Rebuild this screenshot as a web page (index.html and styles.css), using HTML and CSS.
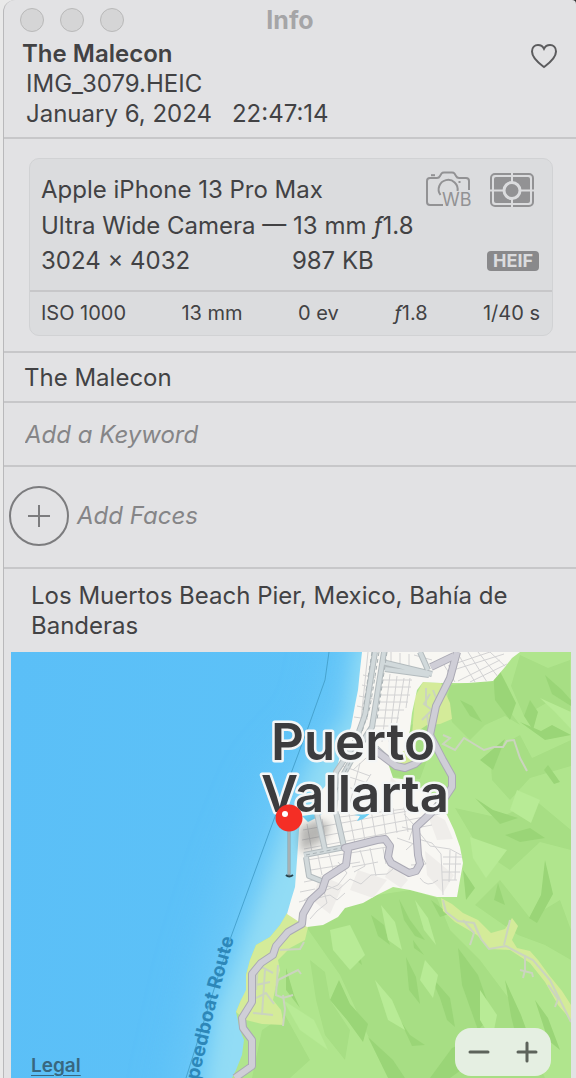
FILE: index.html
```html
<!DOCTYPE html>
<html lang="en">
  <head>
    <meta charset="utf-8" />
    <title>Info</title>
    <meta name="viewport" content="width=device-width, initial-scale=1" />
    <link rel="stylesheet" href="styles.css" />
  </head>
  <body>
    <main class="window">
      <header class="titlebar">
        <div class="lights">
          <button class="light" aria-label="Close"></button>
          <button class="light" aria-label="Minimize"></button>
          <button class="light" aria-label="Zoom"></button>
        </div>
        <h1>Info</h1>
      </header>

      <section class="summary">
        <div class="summary-text">
          <h2>The Malecon</h2>
          <p>IMG_3079.HEIC</p>
          <p class="date"><span>January 6, 2024</span><span>22:47:14</span></p>
        </div>
        <button class="favorite" aria-label="Favorite">
          <svg width="28" height="26" viewBox="0 0 28 26">
            <path d="M14 24C10 21 2 15.500 2 8.500C2 4.500 4.700 2 8 2C10.700 2 12.900 3.500 14 5.800C15.100 3.500 17.300 2 20 2C23.300 2 26 4.500 26 8.500C26 15.500 18 21 14 24Z" />
          </svg>
        </button>
      </section>

      <section class="camera">
        <div class="card">
          <div class="card-main">
            <div class="row">
              <span>Apple iPhone 13 Pro Max</span>
              <div class="icons">
                <svg width="46" height="38" viewBox="0 0 46 38">
                  <g class="line">
                    <path d="M17 34H4Q1 34 1 31V10Q1 7 4 7H11Q13 7 14 5L15.500 2.500Q16.300 1.500 18 1.500H26Q27.700 1.500 28.500 2.500L30 5Q31 7 33 7H40Q43 7 43 10V19" />
                    <path d="M5 4.200H9" />
                    <path d="M14.500 24A9.500 9.500 0 1 1 31.500 20" />
                    <path d="M32.500 11H34.500" />
                  </g>
                  <text x="16" y="35">WB</text>
                </svg>
                <svg width="44" height="36" viewBox="0 0 44 36">
                  <rect class="frame" x="1" y="2" width="42" height="32" rx="4" />
                  <rect class="fill" x="4" y="5" width="36" height="26" rx="2" />
                  <path class="gap" d="M22 0V36M0 18.500H44" />
                  <circle class="ring" cx="22" cy="18.500" r="8" />
                </svg>
              </div>
            </div>
            <p>Ultra Wide Camera — 13 mm <i>ƒ</i>1.8</p>
            <div class="row size">
              <span>3024 × 4032</span>
              <span>987 KB</span>
              <span class="badge">HEIF</span>
            </div>
          </div>
          <ul class="exposure">
            <li>ISO 1000</li>
            <li>13 mm</li>
            <li>0 ev</li>
            <li><i>ƒ</i>1.8</li>
            <li>1/40 s</li>
          </ul>
        </div>
      </section>

      <section class="caption">The Malecon</section>

      <section class="keyword">
        <input type="text" placeholder="Add a Keyword" aria-label="Add a Keyword" />
      </section>

      <section class="faces">
        <button class="add-face">
          <span class="circle">
            <svg width="22" height="22" viewBox="0 0 22 22"><path d="M11 0V22M0 11H22" /></svg>
          </span>
          Add Faces
        </button>
      </section>

      <section class="place">
        <p>Los Muertos Beach Pier, Mexico, Bahía de Banderas</p>
        <div class="map">
          <svg class="map-art" viewBox="11 652 560 426" role="img" aria-label="Map of Puerto Vallarta">
            <defs>
              <linearGradient id="sea" x1="0" x2="1" y1="0" y2="0.100">
                <stop offset="0" stop-color="#5bbff7" />
                <stop offset="1" stop-color="#5ec4f8" />
              </linearGradient>
              <filter id="soft" x="-50%" y="-50%" width="200%" height="200%"><feGaussianBlur stdDeviation="10" /></filter>
              <filter id="wide" x="-50%" y="-50%" width="200%" height="200%"><feGaussianBlur stdDeviation="24" /></filter>
              <filter id="blur" x="-50%" y="-50%" width="200%" height="200%"><feGaussianBlur stdDeviation="4" /></filter>
              <filter id="relief"><feGaussianBlur stdDeviation="0.600" /></filter>
              <clipPath id="land-clip">
                <path d="M362 652H571V1078H232L236 1070L242 1055L244 1040L240 1030L236 1012L241 1000L247 990L246 975L250 960L256 945L270 937L280 925L287 914L340 860L390 760Z" />
              </clipPath>
              <clipPath id="city-clip">
                <path d="M362 652H520L512 658L505 667L493 681L468 683L441 683L423 682L417 690L412 713L410 730L405 750L388 763L393 778L410 780L423 790L447 815L454 830L460 847L463 863L457 897H437L410 890L393 887L377 895L363 903L345 908L338 917L323 925L307 927L287 914L291 900L295 887L297 860L299 830L302 812L318 805L322 790L336 773L340 755L351 727L355 705L358 690L360 670Z" />
              </clipPath>
            </defs>

            <!-- sea and shallows -->
            <rect x="11" y="652" width="560" height="426" fill="url(#sea)" />
            <path filter="url(#wide)" fill="#74cdf8" opacity="0.700" d="M345 620L325 720L270 780L235 870L205 965L170 1120H320L420 900V620Z" />
            <path filter="url(#soft)" fill="#92dcf5" d="M357 640L346 720L312 760L283 830L266 880L240 950L216 1010L202 1100H300L380 900L400 640Z" />
            <path class="ferry" d="M329 652L325 680L309 725L273 822L228 945L186 1078" />

            <!-- hills -->
            <path fill="#b0e58d" d="M362 652H571V1078H232L236 1070L242 1055L244 1040L240 1030L236 1012L241 1000L247 990L246 975L250 960L256 945L270 937L280 925L287 914L340 860L390 760Z" />
            <g clip-path="url(#land-clip)">
              <g filter="url(#relief)">
                <g fill="#a7de84">
                  <path d="M377 895L410 890L437 898L450 930L480 960L510 1000L545 1078H400L370 1040L340 975L307 928L345 908Z" />
                  <path d="M450 685L468 683L493 681L505 705L520 725L505 716L485 725L470 740L452 722L447 700Z" />
                  <path d="M520 655L548 668L570 660V720L548 702L524 716L511 686Z" />
                  <path d="M490 752L520 735L532 758L571 740V766L530 778L510 800L492 780Z" />
                  <path d="M455 808L500 818L535 800L571 830V850L540 842L510 870L480 850Z" />
                  <path d="M475 905L500 880L530 918L560 900L571 930V960L545 945L518 935Z" />
                  <path d="M262 1030L285 1015L310 1060L290 1078H252Z" />
                  <path d="M405 728L425 718L432 746L420 779L393 777L388 764L404 755Z" />
                  <path d="M310 960L325 972L330 1000L350 1030L345 1060L325 1035L316 1000Z" />
                </g>
                <g fill="#9ad577">
                  <path d="M492 656L507 685L516 703L510 720L495 700Z" />
                  <path d="M505 739L493 770L480 760Z" />
                  <path d="M520 722L541 731L552 725L571 735L545 740Z" />
                  <path d="M548 765L560 782L554 784L544 770Z" />
                  <path d="M475 798L493 810L518 818L500 824Z" />
                  <path d="M399 899L410 920L425 940L415 936L404 920Z" />
                  <path d="M413 940L424 955L414 948Z" />
                  <path d="M431 900L449 914L440 917Z" />
                  <path d="M339 980L350 1004L368 1024L363 1042L347 1020L330 1000Z" />
                  <path d="M430 975L450 998L455 1027L447 1020L440 998Z" />
                  <path d="M458 948L478 975L492 1015L478 1030L462 985Z" />
                  <path d="M505 980L521 1015L533 1048L522 1060L511 1016Z" />
                  <path d="M406 957L416 977L420 1004L409 990Z" />
                  <path d="M452 1048L480 1036L464 1068L450 1078H430Z" />
                  <path d="M368 1037L393 1060L405 1078H388Z" />
                  <path d="M498 883L505 905L494 900Z" />
                  <path d="M545 860L553 894L537 923L529 918L541 895Z" />
                  <path d="M463 870L475 888L466 900Z" />
                  <path d="M286 968L294 995L300 1008L286 990Z" />
                  <path d="M530 700L538 712L533 730L524 716Z" />
                  <path d="M460 700L472 706L482 722L470 716Z" />
                  <path d="M545 675L562 690L571 700V706L552 694Z" />
                  <path d="M371 915L384 925L390 945L378 936Z" />
                  <path d="M345 930L358 948L362 965L350 955Z" />
                  <path d="M400 1020L410 1035L425 1045L412 1046Z" />
                  <path d="M535 1000L548 1018L560 1050L548 1040Z" />
                  <path d="M505 835L530 828L545 838L520 842Z" />
                </g>
                <g fill="#b8eb96">
                  <path d="M330 930L350 925L365 955L350 970L333 950Z" />
                  <path d="M381 905L395 922L402 950L388 940Z" />
                  <path d="M283 1000L314 1020L328 1050L300 1030Z" />
                  <path d="M425 960L438 975L433 998L420 980Z" />
                  <path d="M540 698L571 712V729L555 712Z" />
                  <path d="M470 837L507 850L486 878L473 858Z" />
                  <path d="M517 790L540 800L531 823L510 810Z" />
                  <path d="M480 990L497 1015L492 1040L480 1020Z" />
                  <path d="M375 980L392 1000L405 1030L388 1020Z" />
                  <path d="M415 900L428 918L436 945L424 930Z" />
                </g>
              </g>
            </g>

            <!-- scrub -->
            <g fill="#d4eb99">
              <path d="M287 913L280 925L270 937L256 945L250 960L246 975V990L241 1000L236 1012L246 1020L262 1024L284 1025L281 1010L273 1000L276 985L280 970L278 960L290 948L305 940L308 927Z" />
              <path d="M441 898L452 904L463 913L478 920L491 933L505 929L512 918L518 926L512 940L517 948L530 951L538 960L549 975L562 991L571 1005V1020L558 1005L545 982L530 963L510 950L490 949L477 935L455 922L443 911Z" />
              <path d="M423 682L441 683L450 703L452 719L440 724L427 725L412 735L415 697Z" />
              <path d="M404 741L417 735L414 762L398 769Z" />
            </g>

            <!-- city -->
            <g clip-path="url(#city-clip)">
              <rect x="280" y="652" width="250" height="280" fill="#f8f7f3" />
              <g fill="#efedea">
                <path d="M392 862L408 880L401 888L385 877Z" />
                <path d="M425 851L454 875L443 893L427 875Z" />
                <path d="M358 870L387 880L373 898L350 890Z" />
                <path d="M426 810L445 820L453 839L437 840Z" />
                <path d="M391 777L402 787L388 795Z" />
                <path d="M320 875L343 885L330 914L312 900Z" />
              </g>
              <g class="street">
                <path d="M383 680H412M381 687H411M380 695H410M379 702H408M378 710H404M376 718H399M375 726H396M373 734H388M390 674L382 742M397 676L389 742M404 678L396 728M410 678L406 708" />
                <path d="M363 675L376 678M362 685L374 688M359 696L373 699M357 706L370 709M354 717L368 719M368 652L361 720M382 652V662M391 652V664M400 653V668M409 654V670M385 667L428 673M414 655L432 660" />
                <path d="M448 666L490 652M447 672L504 654M458 681L500 660M470 682L507 664M458 654L475 682M468 652L487 682M478 652L499 678M490 652L507 668M440 659L455 682" />
                <path d="M340 765L370 776M337 773L374 785M332 783L362 791M350 757L343 801M360 763L350 803M371 774L354 802M378 747L353 770" />
                <path d="M303 830L430 807M302 840L440 814M304 849L432 825M340 817L420 807M307 824L312 852M322 819L327 850M337 815L343 846M349 814L355 844M360 812L365 841M371 810L376 839M382 809L386 836M393 808L397 833M404 807L408 832" />
                <path d="M307 860L387 847M305 871L360 862M304 882L334 876M317 851L322 875M328 850L333 869M300 892L315 889M299 902L310 899M360 850L365 866L354 872M370 848L376 876M383 848L386 864M352 867L378 862" />
                <path d="M304 900L328 886L338 890L350 879L361 884L371 875L387 874L393 869M338 862L347 873L338 885L324 891L327 903L317 911L310 919M318 898L330 895L337 900L345 893" />
                <path d="M402 827L418 831L430 846L450 849L461 855M397 838L414 844L426 864L411 865M406 850L418 839L432 843L441 854L443 895M443 857H462M443 864H461M442 872H460M442 880H457M450 850L449 882M456 853L455 880M420 878Q427 889 438 880M404 814L414 825L409 840" />
              </g>
              <path fill="#6dcff3" d="M302 816L323 813L318 817L308 822ZM354 815L371 813L363 819L357 821L360 816Z" />
            </g>
            <path filter="url(#blur)" fill="#555" opacity="0.400" d="M299 828L316 820L330 824L324 840L301 853Z" />

            <!-- trails -->
            <g class="trail">
              <path d="M443 735L450 738L443 744L455 750L464 738L484 750L494 747L503 747L507 741L514 740L520 758L527 771" />
              <path d="M443 900L446 912L458 921L474 923L481 939L489 949L506 946L519 953L533 960L550 980L560 1000L571 1022" />
              <path d="M463 920L474 933L470 945M474 923L478 933M525 955V970L523 978M520 970L532 973L533 977M548 985L558 999L555 1007M510 920L504 945" />
              <path d="M280 950L300 949L304 942M278 965L276 995L283 998L293 995M276 990L278 980L298 970L301 974M283 995L285 1009L283 1026M251 971L262 967L273 973M256 985L270 982M252 1000L266 993L274 1004M253 1013L273 1015M265 970L262 1015M258 965L256 990" />
              <path d="M430 694L424 704L432 710L422 720M433 690L439 705L427 715L429 728M426 688V705" />
            </g>

            <!-- major roads -->
            <g class="avenue-edge">
              <path d="M375 652L365 715L357 737L352 748L336 772L334 812M384 652L372 727L357 750L342 777L338 800" />
              <path d="M382 662L432 674M385 669L429 675M420 652L428 670M317 814L325 850M336 812L344 847M304 855L350 846M306 857L309 876L324 882M376 748L392 763" />
            </g>
            <g class="avenue">
              <path d="M375 652L365 715L357 737L352 748L336 772L334 812M384 652L372 727L357 750L342 777L338 800" />
              <path d="M382 662L432 674M385 669L429 675M420 652L428 670M317 814L325 850M336 812L344 847M304 855L350 846M306 857L309 876L324 882M376 748L392 763" />
            </g>
            <path class="dash" d="M379 652L370 707L360 738M372 652L363 710M387 652L377 720M350 762L337 790M306 855L346 847" />
            <g class="highway-edge">
              <path d="M431 667L454 656" />
              <path d="M457 652L450 678L436 706L430 735L443 760L452 776V787L444 799L430 814L416 827L418 855L420 864L416 871L409 873L391 863L388 857L390 846L385 839L377 840L345 848L348 850L346 865L326 878L322 890L311 900L303 914L302 924L288 932L276 946L273 955L261 963L252 974L252 1002L242 1018L243 1028L252 1040L252 1066L235 1078" />
              <path d="M376 751L396 766L405 768L415 764L426 754" />
            </g>
            <g class="highway">
              <path d="M431 667L454 656" />
              <path d="M457 652L450 678L436 706L430 735L443 760L452 776V787L444 799L430 814L416 827L418 855L420 864L416 871L409 873L391 863L388 857L390 846L385 839L377 840L345 848L348 850L346 865L326 878L322 890L311 900L303 914L302 924L288 932L276 946L273 955L261 963L252 974L252 1002L242 1018L243 1028L252 1040L252 1066L235 1078" />
              <path d="M376 751L396 766L405 768L415 764L426 754" />
            </g>

            <!-- labels -->
            <g class="city-name">
              <text x="353" y="760">Puerto</text>
              <text x="355" y="812">Vallarta</text>
            </g>
            <path id="route" fill="none" d="M187 1130L199 1078L216 1004L234 938" />
            <text class="route-name"><textPath href="#route" startOffset="100%">Speedboat Route</textPath></text>

            <!-- pin -->
            <path stroke="#8d9b9f" stroke-width="3" d="M289 830V876" />
            <path stroke="#c0c7c8" stroke-width="1" d="M289 830V874" />
            <path fill="none" stroke="#29424c" stroke-width="2" d="M286 875Q289 878 293 875" />
            <circle cx="289" cy="818" r="13.500" fill="#f42e25" />
            <circle cx="285" cy="814" r="3" fill="#fff" />
          </svg>
          <a class="legal" href="#legal">Legal</a>
          <div class="zoom">
            <button aria-label="Zoom out">
              <svg width="22" height="22" viewBox="0 0 22 22"><path d="M2 11H20" /></svg>
            </button>
            <button aria-label="Zoom in">
              <svg width="22" height="22" viewBox="0 0 22 22"><path d="M2 11H20M11 2V20" /></svg>
            </button>
          </div>
        </div>
      </section>
    </main>
  </body>
</html>
```

FILE: styles.css
```css
* {
  box-sizing: border-box;
}

body {
  margin: 0;
  background: linear-gradient(to right, #e9e9e9 50%, #2c2c2c 50%);
  font-family: Inter, "Liberation Sans", sans-serif;
  font-size: 24px;
  line-height: 30px;
  color: #424244;
}

h1,
h2,
p,
ul {
  margin: 0;
  padding: 0;
}

button,
input {
  margin: 0;
  padding: 0;
  border: 0;
  background: none;
  font: inherit;
  color: inherit;
}

svg {
  display: block;
}

.window {
  margin-left: 3px;
  border-left: 1px solid #b9b9bb;
  border-radius: 12px 4px 0 0;
  background: #e2e2e4;
}

/* Title bar */
.titlebar {
  display: grid;
  grid-template-columns: 1fr auto 1fr;
  align-items: center;
  height: 39px;
  padding: 0 16px;
}

.titlebar h1 {
  font-size: 25px;
  font-weight: 700;
  color: #a5a5a7;
}

.lights {
  display: flex;
  gap: 16px;
}

.light {
  width: 24px;
  height: 24px;
  border: 1px solid #b9b9b9;
  border-radius: 50%;
  background: #d5d5d6;
}

/* Name and date */
.summary {
  display: flex;
  justify-content: space-between;
  padding: 0 18px 8px;
  border-bottom: 2px solid #c7c7c9;
}

.summary h2 {
  font-size: 24px;
  font-weight: 600;
  line-height: 30px;
}

.summary p {
  padding-left: 4px;
}

.date {
  display: flex;
  gap: 20px;
}

.favorite {
  align-self: flex-start;
  margin-top: 4px;
}

.favorite svg {
  fill: none;
  stroke: #5b5b5d;
  stroke-width: 2;
}

/* Camera details */
.camera {
  padding: 19px 23px 15px 25px;
  border-bottom: 2px solid #c7c7c9;
}

.card {
  border: 1px solid #d1d2d4;
  border-radius: 10px;
  background: #dbdcde;
}

.card-main {
  padding: 13px 13px 12px 11px;
  border-bottom: 2px solid #c7c7c9;
}

.card-main p {
  line-height: 36px;
}

.row {
  display: flex;
  justify-content: space-between;
  align-items: center;
  height: 36px;
}

.icons {
  display: flex;
  gap: 18px;
  align-items: center;
  padding-right: 5px;
}

.icons .line {
  fill: none;
  stroke: #929294;
  stroke-width: 2;
}

.icons text {
  font-size: 18px;
  fill: #929294;
}

.icons .frame {
  fill: none;
  stroke: #929294;
  stroke-width: 2;
}

.icons .fill {
  fill: #929294;
}

.icons .gap {
  stroke: #dbdcde;
  stroke-width: 2;
}

.icons .ring {
  fill: #929294;
  stroke: #dbdcde;
  stroke-width: 3;
}

.row.size {
  display: grid;
  grid-template-columns: 9fr 7fr auto;
  height: 34px;
}

.badge {
  width: 52px;
  border-radius: 4px;
  background: #89898b;
  color: #dbdcde;
  font-size: 18px;
  font-weight: 700;
  line-height: 20px;
  text-align: center;
}

.exposure {
  display: flex;
  justify-content: space-between;
  padding: 7px 12px 7px 11px;
  list-style: none;
  font-size: 20px;
  line-height: 29px;
}

/* Caption, keywords and faces */
.caption {
  padding: 10px 20px 8px;
  border-bottom: 2px solid #c7c7c9;
}

.keyword {
  padding: 17px 21px 15px;
  border-bottom: 2px solid #c7c7c9;
}

.keyword input {
  display: block;
  width: 100%;
  height: 30px;
}

.keyword input::placeholder {
  color: #858587;
  font-style: italic;
  opacity: 1;
}

.faces {
  padding: 19px 5px 21px;
  border-bottom: 2px solid #c7c7c9;
}

.add-face {
  display: flex;
  align-items: center;
  gap: 8px;
  color: #858587;
  font-style: italic;
}

.circle {
  display: grid;
  place-items: center;
  width: 60px;
  height: 60px;
  border: 2px solid #7c7c7e;
  border-radius: 50%;
}

.circle svg {
  stroke: #7c7c7e;
  stroke-width: 2;
}

/* Place and map */
.place {
  padding: 12px 5px 0 7px;
}

.place p {
  padding: 0 20px 11px;
}

.map {
  position: relative;
}

.map-art {
  width: 100%;
}

.ferry {
  fill: none;
  stroke: #47a3cf;
  stroke-width: 1;
}

.street,
.trail {
  fill: none;
  stroke: #d2d2d3;
  stroke-width: 1;
}

.trail {
  stroke: #cbd4bf;
  stroke-width: 2;
}

.avenue,
.avenue-edge,
.highway,
.highway-edge {
  fill: none;
  stroke-linejoin: round;
}

.avenue-edge {
  stroke: #b3bbbe;
  stroke-width: 6;
}

.avenue {
  stroke: #d1d9db;
  stroke-width: 4;
}

.dash {
  fill: none;
  stroke: #a9b2b5;
  stroke-width: 1;
  stroke-dasharray: 4 3;
}

.highway-edge {
  stroke: #aaa9b4;
  stroke-width: 8;
}

.highway {
  stroke: #cfced7;
  stroke-width: 6;
}

.city-name {
  fill: #3c3c3e;
  stroke: #f4f6f6;
  stroke-width: 5;
  stroke-linejoin: round;
  paint-order: stroke;
  font-size: 51px;
  font-weight: 600;
  text-anchor: middle;
}

.route-name {
  fill: #2d87b9;
  font-size: 19px;
  font-weight: 700;
  text-anchor: end;
}

.legal {
  position: absolute;
  bottom: 1px;
  left: 20px;
  color: #38677f;
  font-size: 19px;
  font-weight: 600;
  line-height: 22px;
  text-underline-offset: 3px;
}

.zoom {
  position: absolute;
  right: 20px;
  bottom: 2px;
  display: flex;
  justify-content: space-around;
  width: 96px;
  height: 48px;
  border-radius: 16px;
  background: #e5efe2;
}

.zoom svg {
  fill: none;
  stroke: #5d635b;
  stroke-width: 3;
  stroke-linecap: round;
}
```
